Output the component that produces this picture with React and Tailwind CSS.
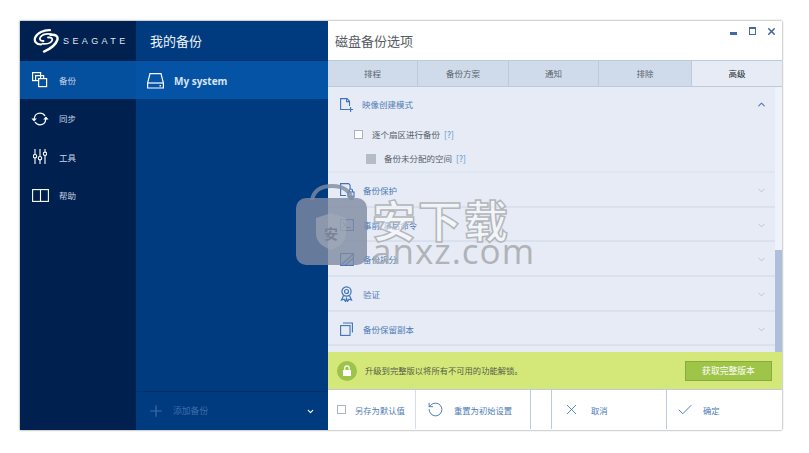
import { ChevronDown, ChevronUp, Plus, X, Check, RotateCcw } from 'lucide-react';

const navItems = [
  { label: '备份', icon: <CopiesIcon />, active: true },
  { label: '同步', icon: <SyncIcon /> },
  { label: '工具', icon: <ToolsIcon /> },
  { label: '帮助', icon: <BookIcon /> },
];

const tabs = [
  { label: '排程', w: 'w-[90px]' },
  { label: '备份方案', w: 'w-[91px]' },
  { label: '通知', w: 'w-[90px]' },
  { label: '排除', w: 'w-[93px]' },
];

const sections = [
  { label: '备份保护', icon: <FileLockIcon /> },
  { label: '事前/事后命令', icon: <ConsoleIcon /> },
  { label: '备份拆分', icon: <SplitIcon /> },
  { label: '验证', icon: <RibbonIcon /> },
  { label: '备份保留副本', icon: <ReplicaIcon /> },
];

function CopiesIcon() {
  return (
    <svg width="16" height="16" viewBox="0 0 16 16" fill="none" stroke="white" strokeWidth="1.2">
      <rect x="0.6" y="0.6" width="8" height="8" />
      <path d="M3.6 8.6V3.6h8v5" />
      <rect x="6.6" y="6.6" width="8" height="8" fill="#044f9e" />
    </svg>
  );
}

function SyncIcon() {
  return (
    <svg width="18" height="14" viewBox="0 0 18 14" fill="none" stroke="white" strokeWidth="1.3">
      <path d="M3.2 7C3.4 3.6 5.8 1.2 9 1.2c2.2 0 3.9 1 5 2.8" />
      <path d="M14.8 7c-.2 3.4-2.6 5.8-5.8 5.8-2.2 0-3.9-1-5-2.8" />
      <path d="M0.4 6.4h5.4L3.1 9.4z" fill="white" stroke="none" />
      <path d="M12.2 7.6h5.4L14.9 4.6z" fill="white" stroke="none" />
    </svg>
  );
}

function ToolsIcon() {
  return (
    <svg width="14" height="15" viewBox="0 0 14 15" fill="none" stroke="white" strokeWidth="1.1">
      <path d="M2 0v5.5M2 9v6M7 0v7.5M7 11v4M12 0v3M12 6.5v8.5" />
      <circle cx="2" cy="7.2" r="1.7" />
      <circle cx="7" cy="9.2" r="1.7" />
      <circle cx="12" cy="4.8" r="1.7" />
    </svg>
  );
}

function BookIcon() {
  return (
    <svg width="17" height="13" viewBox="0 0 17 13" fill="none" stroke="white" strokeWidth="1.1">
      <rect x="0.6" y="0.6" width="15.8" height="11.8" />
      <path d="M8.5 0.6v11.8" />
    </svg>
  );
}

function DriveIcon() {
  return (
    <svg width="17" height="16" viewBox="0 0 17 16" fill="none" stroke="white" strokeWidth="1.2">
      <path d="M3 .6h11L16.4 10v5H.6v-5z" />
      <path d="M.6 10h15.8" />
      <rect x="12.5" y="12" width="1.5" height="1.5" fill="white" stroke="none" />
    </svg>
  );
}

function SeagateLogo() {
  return (
    <svg width="26" height="24" viewBox="0 0 26 24" fill="none" stroke="white" strokeLinecap="round">
      <path d="M8 15.5C3 15.5 .8 12 2.2 8.5 4 4 11 .8 17 1.2" strokeWidth="2.2" />
      <path d="M10.5 12C7 12 6 10 7.5 8 9.5 5.5 14 4.5 18 5.2" strokeWidth="1.8" />
      <path d="M15 8.5c3.5-.4 5.2 1.2 3.8 3.4-1.6 2.4-6 3.4-9.5 2.8" strokeWidth="1.8" />
      <path d="M17.5 5.8c5-.6 8 1.6 6.8 5.2-1.4 4.4-7.4 9-13.3 11.6" strokeWidth="2.4" />
    </svg>
  );
}

function NewFileIcon() {
  return (
    <svg width="14" height="14" viewBox="0 0 14 14" fill="none" stroke="#3f72b8" strokeWidth="1.1">
      <path d="M8 11.5H.6V.6h6.4l2.5 2.6v4.8" />
      <path d="M6.6.6v3h3" />
      <path d="M10.6 9v5M8.1 11.5h5" />
    </svg>
  );
}

function FileLockIcon() {
  return (
    <svg width="15" height="15" viewBox="0 0 15 15" fill="none" stroke="#3f72b8" strokeWidth="1.1">
      <path d="M6 12.5H.6V.6h8l1.5 1.6V6" />
      <rect x="8" y="9" width="6" height="5" />
      <path d="M9.5 9V7.5a1.5 1.5 0 0 1 3 0V9" />
    </svg>
  );
}

function ConsoleIcon() {
  return (
    <svg width="14" height="12" viewBox="0 0 14 12" fill="none" stroke="#3f72b8" strokeWidth="1.1">
      <rect x="0.6" y="0.6" width="12.8" height="10.8" />
      <path d="M3 3.5 5.5 6 3 8.5M6.5 8.5h4" />
    </svg>
  );
}

function SplitIcon() {
  return (
    <svg width="14" height="13" viewBox="0 0 14 13" fill="none" stroke="#3f72b8" strokeWidth="1.1">
      <rect x="0.6" y="0.6" width="12.8" height="11.8" />
      <path d="M1 12 13.4 1M5 12.4 13.4 5" />
    </svg>
  );
}

function RibbonIcon() {
  return (
    <svg width="13" height="16" viewBox="0 0 13 16" fill="none" stroke="#3f72b8" strokeWidth="1.2">
      <circle cx="6.5" cy="5.5" r="4.6" />
      <circle cx="6.5" cy="5.5" r="2" />
      <path d="M3.5 9.5 1.5 14l2.6-.8L5.5 15.5l1-3 1 3 1.4-2.3 2.6.8-2-4.5" />
    </svg>
  );
}

function ReplicaIcon() {
  return (
    <svg width="13" height="14" viewBox="0 0 13 14" fill="none" stroke="#3f72b8" strokeWidth="1.1">
      <rect x="0.6" y="3.6" width="9.4" height="9.8" />
      <path d="M3 1h9.4v9.6" />
    </svg>
  );
}

function SectionRow({ item }) {
  return (
    <div className="flex h-[34.7px] items-center border-b-2 border-[#d9e1ef] pl-[12px] pr-[8px] pt-[2px]">
      <span className="flex w-[23px] justify-start">{item.icon}</span>
      <span className="text-[8.5px] text-[#4f7bb5]">{item.label}</span>
      <ChevronDown className="ml-auto text-[#b8c2d2]" size={11} strokeWidth={2} />
    </div>
  );
}

function Sidebar() {
  return (
    <aside className="flex w-[116px] flex-col bg-[#00214f]">
      <div className="flex h-[40px] items-center gap-[4px] pl-[13px]">
        <SeagateLogo />
        <span className="pt-[2px] text-[9px] tracking-[3.4px] text-[#dfe6f0] [font-family:'Liberation_Sans',sans-serif]">SEAGATE</span>
      </div>
      {navItems.map((item) => (
        <div
          key={item.label}
          className={`flex h-[38.4px] items-center ${item.active ? 'bg-[#044f9e]' : ''}`}
        >
          <span className="flex w-[39px] justify-center pl-[1px]">{item.icon}</span>
          <span className="text-[8.5px] text-[#c9d4e3]">{item.label}</span>
        </div>
      ))}
    </aside>
  );
}

function BackupList() {
  return (
    <section className="flex w-[192px] flex-col bg-[#003b80]">
      <div className="flex h-[40px] items-center border-b border-[#033068] pl-[14px] text-[13px] text-[#eef2f8]">我的备份</div>
      <div className="flex h-[38px] items-center bg-[#0553a5] pt-[2px]">
        <span className="flex w-[38px] justify-center pl-[1px]"><DriveIcon /></span>
        <span className="text-[10px] font-bold text-[#d8e3f0] [font-family:'Open_Sans',sans-serif]">My system</span>
      </div>
      <div className="flex-1" />
      <div className="flex h-[39px] items-center border-t border-[#033068] pl-[11px] pr-[13px]">
        <Plus className="text-[#3f6ea8]" size={18} strokeWidth={1.5} />
        <span className="ml-[8px] text-[8.8px] text-[#3f6ea8]">添加备份</span>
        <ChevronDown className="ml-auto text-white" size={9} strokeWidth={3} />
      </div>
    </section>
  );
}

function OptionsPanel() {
  return (
    <section className="flex flex-1 flex-col bg-white">
      <header className="relative flex h-[39px] items-center pl-[7px] text-[13px] text-[#565b63]">
        磁盘备份选项
        <div className="absolute left-[402px] top-[6px] flex items-start text-[#44699c]">
          <span className="mt-[5px] block h-[3px] w-[7px] bg-[#44699c]" />
          <span className="ml-[12px] block h-[8px] w-[7px] border border-t-2 border-[#44699c]" />
          <X className="ml-[10px] -mt-[1px]" size={11} strokeWidth={3.4} />
        </div>
      </header>

      <nav className="flex h-[27px] border-y border-[#bccadb] bg-[#cfdbea] text-[8.5px] text-[#5c636d]">
        {tabs.map((tab) => (
          <div key={tab.label} className={`flex items-center justify-center border-r border-[#bccadb] ${tab.w}`}>{tab.label}</div>
        ))}
        <div className="flex flex-1 items-center justify-center bg-[#e6ebf5] text-[#23272d]">高级</div>
      </nav>

      <div className="flex h-[265px] bg-[#e6ebf5]">
        <div className="min-w-0 flex-1 overflow-hidden">
          <div className="flex h-[35px] items-center pl-[12px] pr-[8px]">
            <span className="w-[22px]"><NewFileIcon /></span>
            <span className="text-[8.5px] text-[#4f7bb5]">映像创建模式</span>
            <ChevronUp className="ml-auto text-[#4f7bb5]" size={11} strokeWidth={2.4} />
          </div>
          <div className="flex h-[25px] items-center pl-[26px] text-[8.5px] text-[#565e6b]">
            <span className="block h-[9px] w-[9px] border border-[#aab4c4] bg-white" />
            <span className="ml-[9px]">逐个扇区进行备份</span>
            <span className="ml-[4px] text-[#5c94d0]">[?]</span>
          </div>
          <div className="flex h-[26px] items-center border-b-2 border-[#dfe5f1] pb-[1px] pl-[38px] text-[8.5px] text-[#565e6b]">
            <span className="block h-[10px] w-[10px] bg-[#b3bcc7]" />
            <span className="ml-[8px]">备份未分配的空间</span>
            <span className="ml-[4px] text-[#5c94d0]">[?]</span>
          </div>
          {sections.map((item) => (
            <SectionRow key={item.label} item={item} />
          ))}
        </div>
        <div className="flex w-[7px] flex-col bg-[#eef2fa]">
          <div className="mt-[163px] flex-1 bg-[#adbfdb]" />
        </div>
      </div>

      <div className="flex h-[38px] items-center border-b border-[#bccadb] bg-[#d4e87a] pl-[9px] pr-[10px]">
        <span className="flex h-[20px] w-[20px] items-center justify-center rounded-full bg-[#9dc34a]">
          <svg width="10" height="11" viewBox="0 0 10 11" fill="white">
            <path d="M1 5h8v6H1z" />
            <path d="M2.8 5V3a2.2 2.2 0 0 1 4.4 0v2" fill="none" stroke="white" strokeWidth="1.2" />
          </svg>
        </span>
        <span className="ml-[8px] text-[8.3px] text-[#565c48]">升级到完整版以将所有不可用的功能解锁。</span>
        <button className="ml-auto flex h-[20px] w-[87px] items-center justify-center border border-[#86ab3e] bg-[#9ec448] text-[8.8px] text-white">获取完整版本</button>
      </div>

      <footer className="flex h-[39px] text-[8.3px] text-[#4f7bb5]">
        <div className="flex w-[88px] items-center border-r border-[#d5deec] pl-[9px]">
          <span className="block h-[9px] w-[9px] border border-[#aab4c4]" />
          <span className="ml-[9px] pt-[1px]">另存为默认值</span>
        </div>
        <div className="flex w-[115px] items-center border-r border-[#bccadb] pl-[11px]">
          <RotateCcw className="text-[#3f72b8]" size={17} strokeWidth={1.3} />
          <span className="ml-[10px] pt-[1px]">重置为初始设置</span>
        </div>
        <div className="w-[21px] border-r border-[#bccadb]" />
        <div className="flex w-[115px] items-center border-r border-[#bccadb] pl-[11px]">
          <X className="text-[#3f72b8]" size={17} strokeWidth={1.2} />
          <span className="ml-[11px] pt-[1px]">取消</span>
        </div>
        <div className="flex flex-1 items-center pl-[9px]">
          <Check className="text-[#3f72b8]" size={18} strokeWidth={1.2} />
          <span className="ml-[9px] pt-[1px]">确定</span>
        </div>
      </footer>
    </section>
  );
}

// the download site's watermark sits over the whole window, row labels show through it
function Watermark() {
  return (
    <div className="pointer-events-none absolute left-[296px] top-[184px] flex gap-[5px]">
      <svg width="71" height="82" viewBox="0 0 71 82">
        <path d="M16 16C18 6 26 2 36 2s18 4 20 14" fill="none" stroke="#808ba1" strokeOpacity="0.8" strokeWidth="4" />
        <rect x="0" y="14" width="71" height="67" rx="10" fill="#808ba1" fillOpacity="0.8" />
        <path d="M35 29l15 5v16c0 8-7 13-15 16-8-3-15-8-15-16V34z" fill="#a3abb9" fillOpacity="0.6" />
        <text x="35" y="55" textAnchor="middle" fontSize="14" fontWeight="700" fill="#78839a" fontFamily="'Noto Sans CJK SC',sans-serif">安</text>
      </svg>
      <div className="flex flex-col pt-[12px]">
        <span className="text-[44px] font-bold leading-[47px] tracking-[2px] text-white/50 [-webkit-text-stroke:1.5px_#b4b6ba]">安下载</span>
        <span className="-mt-[4px] text-[35px] leading-[24px] tracking-[1px] text-[#a9abaf]/90 [font-family:'Open_Sans',sans-serif]">anxz.com</span>
      </div>
    </div>
  );
}

export default function App() {
  return (
    <div className="relative h-[453px] w-[809px] overflow-hidden bg-white pl-[20px] pt-[21px] [font-family:'Noto_Sans_CJK_SC','Liberation_Sans',sans-serif]">
      <div className="flex h-[409px] w-[762px] shadow-[0_0_2px_#777]">
        <Sidebar />
        <BackupList />
        <OptionsPanel />
      </div>
      <Watermark />
    </div>
  );
}
